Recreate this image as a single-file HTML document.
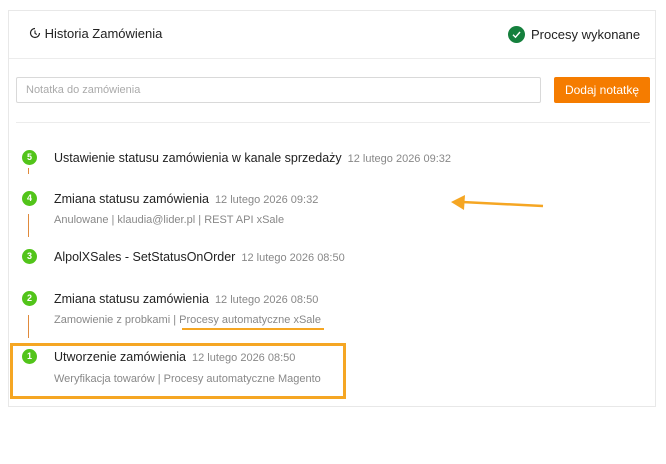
<!DOCTYPE html><html><head><meta charset="utf-8"><style>
body{margin:0;width:666px;height:464px;background:#fff;font-family:"Liberation Sans",sans-serif;position:relative;overflow:hidden}
.a{position:absolute;white-space:nowrap}
.card{position:absolute;left:8px;top:10px;width:648px;height:397px;border:1px solid #e8e8e8;box-sizing:border-box}
.t{font-size:12.5px;color:#222}
.d{font-size:11px;color:#888;margin-left:6px}
.s{font-size:11px;color:#888}
.c{position:absolute;left:22px;width:15px;height:15px;border-radius:50%;background:#52c41a;color:#fff;font-size:9px;font-weight:bold;text-align:center;line-height:15px}
.l{position:absolute;left:28px;width:1px;background:#e08a3c}
</style></head><body>
<div class="card"></div>
<div class="a" style="left:29px;top:26px;font-size:13px;color:#222">
<svg width="12" height="12" viewBox="0 0 12 12" style="vertical-align:-1px"><path d="M10.5 6A4.5 4.5 0 1 1 6 1.5" fill="none" stroke="#222" stroke-width="1.2"/><path d="M6 3.5V6.3L7.8 7.5" fill="none" stroke="#222" stroke-width="1.1"/></svg> Historia Zamówienia</div>
<div class="a" style="left:508px;top:26px;width:17px;height:17px;border-radius:50%;background:#15803d"><svg width="17" height="17"><path d="M5 8.8L7.5 11.2L12 6" fill="none" stroke="#fff" stroke-width="1.4"/></svg></div>
<div class="a" style="left:531px;top:27px;font-size:13px;color:#222">Procesy wykonane</div>
<div class="a" style="left:9px;top:58px;width:646px;height:1px;background:#ececec"></div>
<div class="a" style="left:16px;top:77px;width:525px;height:26px;border:1px solid #d9d9d9;box-sizing:border-box;border-radius:2px"></div>
<div class="a" style="left:26px;top:84px;font-size:11px;color:#aaa">Notatka do zamówienia</div>
<div class="a" style="left:554px;top:77px;width:96px;height:26px;background:#f57c00;border-radius:2px;color:#fff;font-size:12px;text-align:center;line-height:26px">Dodaj notatkę</div>
<div class="a" style="left:16px;top:122px;width:634px;height:1px;background:#ececec"></div>

<div class="c" style="top:150px">5</div>
<div class="l" style="top:168px;height:6px"></div>
<div class="a" style="left:54px;top:149px"><span class="t">Ustawienie statusu zamówienia w kanale sprzedaży</span><span class="d">12 lutego 2026 09:32</span></div>

<div class="c" style="top:191px">4</div>
<div class="l" style="top:214px;height:23px"></div>
<div class="a" style="left:54px;top:190px"><span class="t">Zmiana statusu zamówienia</span><span class="d">12 lutego 2026 09:32</span></div>
<div class="a s" style="left:54px;top:214px">Anulowane | klaudia@lider.pl | REST API xSale</div>

<div class="c" style="top:249px">3</div>
<div class="a" style="left:54px;top:248px"><span class="t">AlpolXSales - SetStatusOnOrder</span><span class="d">12 lutego 2026 08:50</span></div>

<div class="c" style="top:291px">2</div>
<div class="l" style="top:315px;height:23px"></div>
<div class="a" style="left:54px;top:290px"><span class="t">Zmiana statusu zamówienia</span><span class="d">12 lutego 2026 08:50</span></div>
<div class="a s" style="left:54px;top:314px">Zamowienie z probkami | Procesy automatyczne xSale</div>
<div class="a" style="left:182px;top:328px;width:142px;height:2px;background:#f5a623"></div>

<div class="a" style="left:10px;top:343px;width:336px;height:56px;border:3px solid #f5a623;box-sizing:border-box"></div>
<div class="c" style="top:349px">1</div>
<div class="a" style="left:54px;top:348px"><span class="t">Utworzenie zamówienia</span><span class="d">12 lutego 2026 08:50</span></div>
<div class="a s" style="left:54px;top:373px">Weryfikacja towarów | Procesy automatyczne Magento</div>

<svg class="a" style="left:0;top:0" width="666" height="464"><path d="M543 206L462 202" stroke="#f5a623" stroke-width="2.5"/><path d="M451 202L465 195L464 210Z" fill="#f5a623"/></svg>
</body></html>
